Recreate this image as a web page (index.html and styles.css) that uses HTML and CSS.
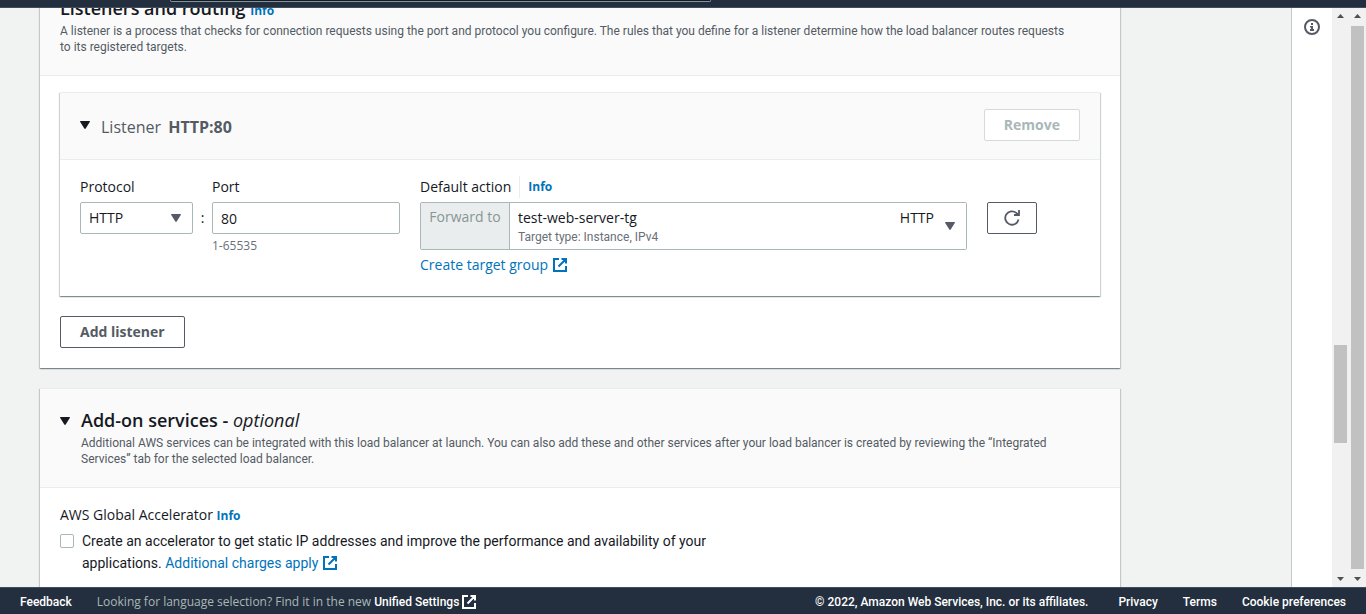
FILE: index.html
```html
<!DOCTYPE html>
<html lang="en">
<head>
<meta charset="utf-8">
<title>Create load balancer</title>
<link rel="stylesheet" href="styles.css">
</head>
<body>
<svg class="sprite" aria-hidden="true">
  <symbol id="external" viewBox="0 0 16 16">
    <path d="M7 2H2v12h12V9M9.500 2H14v4.500M14 2L6.500 9.500" fill="none" stroke="currentColor" stroke-width="2"/>
  </symbol>
  <symbol id="caret" viewBox="0 0 10 8">
    <path d="M.5 0h9q.7 0 .4.800L5.700 7.600q-.7.800-1.400 0L.1.800Q-.2 0 .5 0z" fill="currentColor"/>
  </symbol>
</svg>
<div class="app">
  <header class="topbar"><div class="topbar-search"></div></header>
  <div class="middle">
    <main class="content">
      <section class="panel panel-listeners">
        <div class="panel-head">
          <h2 class="title">Listeners and routing <a class="info" href="#">Info</a></h2>
          <p class="description">A listener is a process that checks for connection requests using the port and protocol you configure. The rules that you define for a listener determine how the load balancer routes requests to its registered targets.</p>
        </div>
        <div class="panel-body">
          <section class="card">
            <div class="card-head">
              <svg class="caret" aria-hidden="true"><use href="#caret"/></svg>
              <h3 class="card-title">Listener <strong>HTTP:80</strong></h3>
              <button class="button" type="button" disabled>Remove</button>
            </div>
            <div class="fields">
              <div class="field">
                <label for="protocol">Protocol</label>
                <div class="select-wrap">
                  <select id="protocol" class="control"><option>HTTP</option></select>
                  <svg class="caret" aria-hidden="true"><use href="#caret"/></svg>
                </div>
              </div>
              <span class="colon">:</span>
              <div class="field">
                <label for="port">Port</label>
                <input id="port" class="control" type="text" value="80" aria-describedby="port-hint">
                <span id="port-hint" class="hint">1-65535</span>
              </div>
              <div class="field field-action">
                <div class="label-row">
                  <span id="action-label">Default action</span>
                  <a class="info label-info" href="#">Info</a>
                </div>
                <div class="action">
                  <span class="action-prefix">Forward to</span>
                  <button class="target" type="button" aria-haspopup="listbox" aria-labelledby="action-label target-name">
                    <span class="target-text">
                      <span id="target-name">test-web-server-tg</span>
                      <span class="target-type">Target type: Instance, IPv4</span>
                    </span>
                    <span class="target-protocol">HTTP</span>
                    <svg class="caret" aria-hidden="true"><use href="#caret"/></svg>
                  </button>
                </div>
                <a class="link" href="#">Create target group <svg class="external" aria-hidden="true"><use href="#external"/></svg></a>
              </div>
              <button class="button refresh" type="button" aria-label="Refresh target groups">
                <svg viewBox="0 0 16 16" aria-hidden="true">
                  <path d="M14.500 9.500A6.700 6.700 0 1 1 12.300 2.900L14.500 5M15 0v5h-5" fill="none" stroke="currentColor" stroke-width="1.800"/>
                </svg>
              </button>
            </div>
          </section>
          <button class="button" type="button">Add listener</button>
        </div>
      </section>

      <section class="panel">
        <div class="panel-head panel-head-expand">
          <svg class="caret" aria-hidden="true"><use href="#caret"/></svg>
          <div>
            <h2 class="title">Add-on services - <em>optional</em></h2>
            <p class="description">Additional AWS services can be integrated with this load balancer at launch. You can also add these and other services after your load balancer is created by reviewing the “Integrated Services” tab for the selected load balancer.</p>
          </div>
        </div>
        <div class="panel-body">
          <div>AWS Global Accelerator <a class="info" href="#">Info</a></div>
          <div class="check">
            <input id="accelerator" type="checkbox">
            <div class="check-text"><label for="accelerator">Create an accelerator to get static IP addresses and improve the performance and availability of your applications.</label> <a href="#">Additional charges apply <svg class="external" aria-hidden="true"><use href="#external"/></svg></a></div>
          </div>
        </div>
      </section>
    </main>
    <aside class="tools">
      <button class="tools-button" type="button" aria-label="Open help panel">
        <svg viewBox="0 0 16 16" aria-hidden="true">
          <circle cx="8" cy="8" r="7" fill="none" stroke="currentColor" stroke-width="2"/>
          <path d="M7 4h2v2H7zM6 7h3v3h1v2H6v-2h1V8.500H6z" fill="currentColor"/>
        </svg>
      </button>
    </aside>
    <div class="scrollbar scrollbar-inner" aria-hidden="true">
      <svg class="arrow" viewBox="0 0 7 4"><path d="M3.500 0L7 4H0z"/></svg>
      <div class="track"><div class="thumb"></div></div>
      <svg class="arrow" viewBox="0 0 7 4"><path d="M0 0h7L3.500 4z"/></svg>
    </div>
    <div class="scrollbar scrollbar-outer" aria-hidden="true">
      <svg class="arrow" viewBox="0 0 7 4"><path d="M3.500 0L7 4H0z"/></svg>
      <div class="track"><div class="thumb"></div></div>
      <svg class="arrow" viewBox="0 0 7 4"><path d="M0 0h7L3.500 4z"/></svg>
    </div>
  </div>
  <footer class="footer">
    <a href="#">Feedback</a>
    <span class="language">Looking for language selection? Find it in the new <a href="#">Unified Settings<svg class="external" aria-hidden="true"><use href="#external"/></svg></a></span>
    <span class="copyright">© 2022, Amazon Web Services, Inc. or its affiliates.</span>
    <a href="#">Privacy</a>
    <a href="#">Terms</a>
    <a href="#">Cookie preferences</a>
  </footer>
</div>
</body>
</html>
```
FILE: styles.css
```css
* { box-sizing: border-box; }

body {
  margin: 0;
  color: #16191f;
  font: 14px/22px "Open Sans", "Noto Sans", sans-serif;
}

h2, h3, p { margin: 0; }
button, input, select { font: inherit; color: inherit; }
a { color: #0073bb; text-decoration: none; }

.sprite { position: absolute; width: 0; height: 0; }

.app {
  display: flex;
  flex-direction: column;
  height: 100vh;
  overflow: hidden;
}

.topbar {
  flex: none;
  height: 8px;
  background: #232f3e;
  border-bottom: 1px solid #414d5c;
}

.topbar-search {
  width: 541px;
  height: 2px;
  margin-left: 170px;
  background: #0f1b2a;
  border: 1px solid #879596;
  border-top: 0;
  border-radius: 0 0 2px 2px;
}

.middle {
  flex: 1;
  display: flex;
  min-height: 0;
  background: #f2f3f3;
}

.content {
  flex: 1;
  min-width: 0;
  overflow: hidden;
  padding: 0 40px;
  background: #f1f3f3;
}

/* Panels */
.panel {
  max-width: 1080px;
  margin-bottom: 20px;
  background: #fff;
  border-top: 1px solid #eaeded;
  box-shadow: 0 1px 1px 0 rgba(0, 28, 36, .3), 1px 1px 1px 0 rgba(0, 28, 36, .15), -1px 1px 1px 0 rgba(0, 28, 36, .15);
}

.panel-listeners { margin-top: -32px; }
.panel-listeners .description { margin-top: 1px; }

.panel-head {
  padding: 20px;
  background: #fafafa;
  border-bottom: 1px solid #eaeded;
}

.panel-head-expand { display: flex; gap: 11px; }
.panel-head-expand .caret { margin-top: 8px; }

.title { font-size: 18px; line-height: 22px; font-weight: 600; }
.title em { font-weight: 400; }

.description {
  max-width: 1012px;
  margin-top: 4px;
  color: #545b64;
  font: 12px/16px Roboto, "Noto Sans", sans-serif;
}

.panel-body { padding: 16px 20px 20px; }

.info { font-size: 12px; font-weight: 700; }

.caret { flex: none; width: 10px; height: 8px; }

/* Listener card */
.card {
  margin-bottom: 20px;
  border-top: 1px solid #eaeded;
  box-shadow: 0 1px 1px 0 rgba(0, 28, 36, .3), 1px 1px 1px 0 rgba(0, 28, 36, .15), -1px 1px 1px 0 rgba(0, 28, 36, .15);
}

.card-head {
  display: flex;
  align-items: center;
  padding: 16px 20px 18px;
  background: #fafafa;
  border-bottom: 1px solid #eaeded;
}

.card-title {
  flex: 1;
  margin-left: 11px;
  padding-top: 4px;
  color: #545b64;
  font-size: 16px;
  font-weight: 400;
}

.card-title strong { margin-left: 3px; }

.button {
  height: 32px;
  padding: 0 19px;
  background: #fff;
  border: 1px solid #545b64;
  border-radius: 2px;
  color: #545b64;
  font-weight: 700;
  line-height: 22px;
}

.button:disabled { border-color: #d5dbdb; color: #aab7b8; }

.fields {
  display: flex;
  align-items: flex-start;
  padding: 16px 63px 20px 20px;
}

.field { display: flex; flex-direction: column; gap: 4px; width: 188px; }
.field:first-child { width: 113px; }

.control {
  width: 100%;
  height: 32px;
  padding: 0 8px;
  appearance: none;
  background: #fff;
  border: 1px solid #aab7b8;
  border-radius: 2px;
}

.select-wrap { display: grid; align-items: center; }
.select-wrap > * { grid-area: 1 / 1; }
.select-wrap .caret { justify-self: end; margin-right: 12px; color: #545b64; pointer-events: none; }

.colon { width: 19px; padding-top: 31px; text-align: center; }

.hint { color: #687078; font-size: 12px; line-height: 16px; }

.field-action { flex: 1; min-width: 0; margin: 0 20px; }

.label-row { display: flex; gap: 8px; }
.label-info { padding-left: 8px; border-left: 1px solid #eaeded; }

.action {
  display: flex;
  height: 48px;
  border: 1px solid #aab7b8;
  border-radius: 2px;
}

.action-prefix {
  width: 89px;
  padding-top: 3px;
  background: #eaeded;
  border-right: 1px solid #aab7b8;
  color: #879596;
  text-align: center;
}

.target {
  flex: 1;
  display: flex;
  align-items: center;
  padding: 0 11px 0 8px;
  background: #fff;
  border: 0;
  text-align: left;
}

.target-text { flex: 1; display: flex; flex-direction: column; }
.target-type { color: #687078; font: 12px/16px Roboto, "Noto Sans", sans-serif; }
.target-protocol { align-self: flex-start; padding-top: 4px; margin-right: 11px; }
.target .caret { color: #545b64; }

.link { display: flex; align-items: center; gap: 4px; }
.external { flex: none; width: 16px; height: 16px; }

.refresh { flex: none; width: 50px; margin-top: 26px; padding: 0; }
.refresh svg { display: block; width: 16px; height: 16px; margin: auto; }

/* Add-on services */
.check { display: flex; gap: 8px; margin-top: 3px; max-width: 665px; }

.check input {
  flex: none;
  width: 14px;
  height: 14px;
  margin: 4px 0;
  appearance: none;
  background: #fff;
  border: 1px solid #aab7b8;
  border-radius: 2px;
}

.check-text { font-family: Roboto, "Noto Sans", sans-serif; }
.check-text .external { vertical-align: text-bottom; }

/* Help rail and scrollbars */
.tools {
  flex: none;
  width: 41px;
  padding-top: 11px;
  background: #fff;
  border-left: 1px solid #c3cbcb;
}

.tools-button { display: block; width: 16px; height: 16px; margin: 0 auto; padding: 0; background: none; border: 0; color: #545b64; }
.tools-button svg { display: block; width: 16px; height: 16px; }

.scrollbar {
  flex: none;
  display: flex;
  flex-direction: column;
  align-items: center;
  width: 17px;
  padding: 6px 0;
  background: #f1f1f1;
}

.arrow { flex: none; width: 7px; height: 4px; fill: #505050; }
.track { flex: 1; display: flex; flex-direction: column; width: 13px; margin: 8px 0; }
.thumb { background: #c1c1c1; }
.scrollbar-inner .thumb { height: 18%; margin-top: 319px; }
.scrollbar-outer .thumb { flex: 1; }

/* Footer */
.footer {
  flex: none;
  display: flex;
  align-items: center;
  gap: 25px;
  height: 27px;
  padding: 2px 20px 0;
  background: #232f3e;
  border-top: 1px solid #414d5c;
  color: #fff;
  font: 12px/16px Roboto, "Noto Sans", sans-serif;
  white-space: nowrap;
}

.footer a, .copyright { color: #fff; font-weight: 500; }
.language { display: flex; gap: 3px; color: #aab7b8; font-family: "Open Sans", "Noto Sans", sans-serif; }
.language a { display: flex; gap: 2px; font-family: Roboto, "Noto Sans", sans-serif; }
.copyright { margin-left: auto; margin-right: 5px; }
```
